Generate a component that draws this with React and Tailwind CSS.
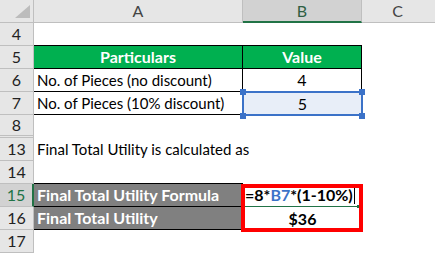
import React from 'react';

// Excel-like sheet snapshot: Final Total Utility example
const headBase = 'w-[34px] shrink-0 h-full flex items-center justify-center border-r border-b text-[16px]';

const RowHead = ({ n, active, hidden }) => (
    <div
        className={`${headBase} ${
            active
                ? 'bg-[#d2d2d2] text-[#217346] border-r-2 border-r-[#217346] border-b-[#bfbfbf]'
                : 'bg-[#e6e6e6] text-[#222] border-[#bfbfbf]'
        } ${hidden ? 'border-b-[3px] border-double' : ''}`}
    >
        {n}
    </div>
);

const Row = ({ n, active, hidden, a, b, aCls = '', bCls = '' }) => (
    <div className="flex h-[23px]">
        <RowHead n={n} active={active} hidden={hidden} />
        <div className={`w-[209px] shrink-0 h-full flex items-center whitespace-nowrap ${aCls}`}>{a}</div>
        <div className={`w-[119px] shrink-0 h-full flex items-center whitespace-nowrap ${bCls}`}>{b}</div>
        <div className="flex-1 h-full"></div>
    </div>
);

export default function App() {
    return (
        <div className="w-[435px] h-[253px] overflow-hidden bg-white text-[15px] text-black font-['Lato','Liberation_Sans',sans-serif]">
            {/* Column headers */}
            <div className="flex h-[23px] text-[16px]">
                <div className="w-[34px] shrink-0 h-full bg-[#e6e6e6] border-r border-b border-[#bfbfbf] relative">
                    <svg className="absolute left-[15px] top-[5px]" width="15" height="13" viewBox="0 0 15 13">
                        <polygon points="15,0 15,13 0,13" fill="#bcbcbc" />
                    </svg>
                </div>
                <div className="w-[209px] shrink-0 h-full bg-[#e6e6e6] border-r border-b border-[#bfbfbf] flex items-center justify-center text-[#444]">A</div>
                <div className="w-[119px] shrink-0 h-full bg-[#d2d2d2] border-r border-[#bfbfbf] border-b-2 border-b-[#217346] flex items-center justify-center text-[#2f5f44]">B</div>
                <div className="flex-1 h-full bg-[#e6e6e6] border-b border-[#bfbfbf] flex items-center justify-center text-[#444] pr-[2px]">C</div>
            </div>

            <Row n="4" aCls="border-b border-black" bCls="border-b border-black" />
            <Row
                n="5"
                a="Particulars"
                b="Value"
                aCls="bg-[#00b050] text-white font-bold text-[16px] justify-center border-r border-b border-black"
                bCls="bg-[#00b050] text-white font-bold text-[16px] justify-center border-r border-b border-black"
            />
            <Row
                n="6"
                a="No. of Pieces (no discount)"
                b="4"
                aCls="pl-[3px] border-r border-b border-black"
                bCls="justify-center border-r border-b border-black text-[16px]"
            />
            <div className="flex h-[23px]">
                <RowHead n="7" />
                <div className="w-[209px] shrink-0 h-full flex items-center whitespace-nowrap pl-[3px] border-r border-b border-black">
                    No. of Pieces (10% discount)
                </div>
                <div className="w-[119px] shrink-0 h-full flex items-center justify-center bg-[#e8eef8] relative text-[16px]">
                    5
                    <div className="absolute -left-[1px] -top-[1px] -right-[1px] -bottom-[1px] border-2 border-[#3b72c8]"></div>
                    <span className="absolute -left-[3px] -top-[3px] w-[6px] h-[6px] bg-[#3b72c8]"></span>
                    <span className="absolute -right-[3px] -top-[3px] w-[6px] h-[6px] bg-[#3b72c8]"></span>
                    <span className="absolute -left-[3px] -bottom-[4px] w-[6px] h-[6px] bg-[#3b72c8]"></span>
                    <span className="absolute -right-[3px] -bottom-[4px] w-[6px] h-[6px] bg-[#3b72c8]"></span>
                </div>
                <div className="flex-1 h-full"></div>
            </div>
            <Row n="8" hidden />
            <Row n="13" a="Final Total Utility is calculated as" aCls="pl-[3px] overflow-visible" />
            <Row n="14" aCls="border-b border-black" />

            <div className="flex h-[23px]">
                <RowHead n="15" active />
                <div className="w-[209px] shrink-0 h-full flex items-center whitespace-nowrap pl-[3px] bg-[#808080] text-white font-bold text-[16px] border-b border-black">
                    Final Total Utility Formula
                </div>
                <div className="w-[119px] shrink-0 h-full flex items-center whitespace-nowrap font-bold text-[16px] relative border-b border-[#217346] pl-[2px]">
                    <span>=8*</span>
                    <span className="text-[#3b72c8]">B7</span>
                    <span>*(1-10%)</span>
                    <span className="inline-block w-px h-[17px] bg-black ml-[1px]"></span>
                    <span className="absolute right-[2px] -bottom-[2px] w-[3px] h-[3px] bg-[#217346]"></span>
                    <div className="absolute -left-[2px] top-0 w-[122px] h-[48px] border-4 border-[#ff0000] z-10"></div>
                </div>
                <div className="flex-1 h-full"></div>
            </div>
            <Row
                n="16"
                a="Final Total Utility"
                b="$36"
                aCls="pl-[3px] bg-[#808080] text-white font-bold text-[16px] border-b border-black"
                bCls="justify-center font-bold text-[16px]"
            />
            <Row n="17" />
        </div>
    );
}
